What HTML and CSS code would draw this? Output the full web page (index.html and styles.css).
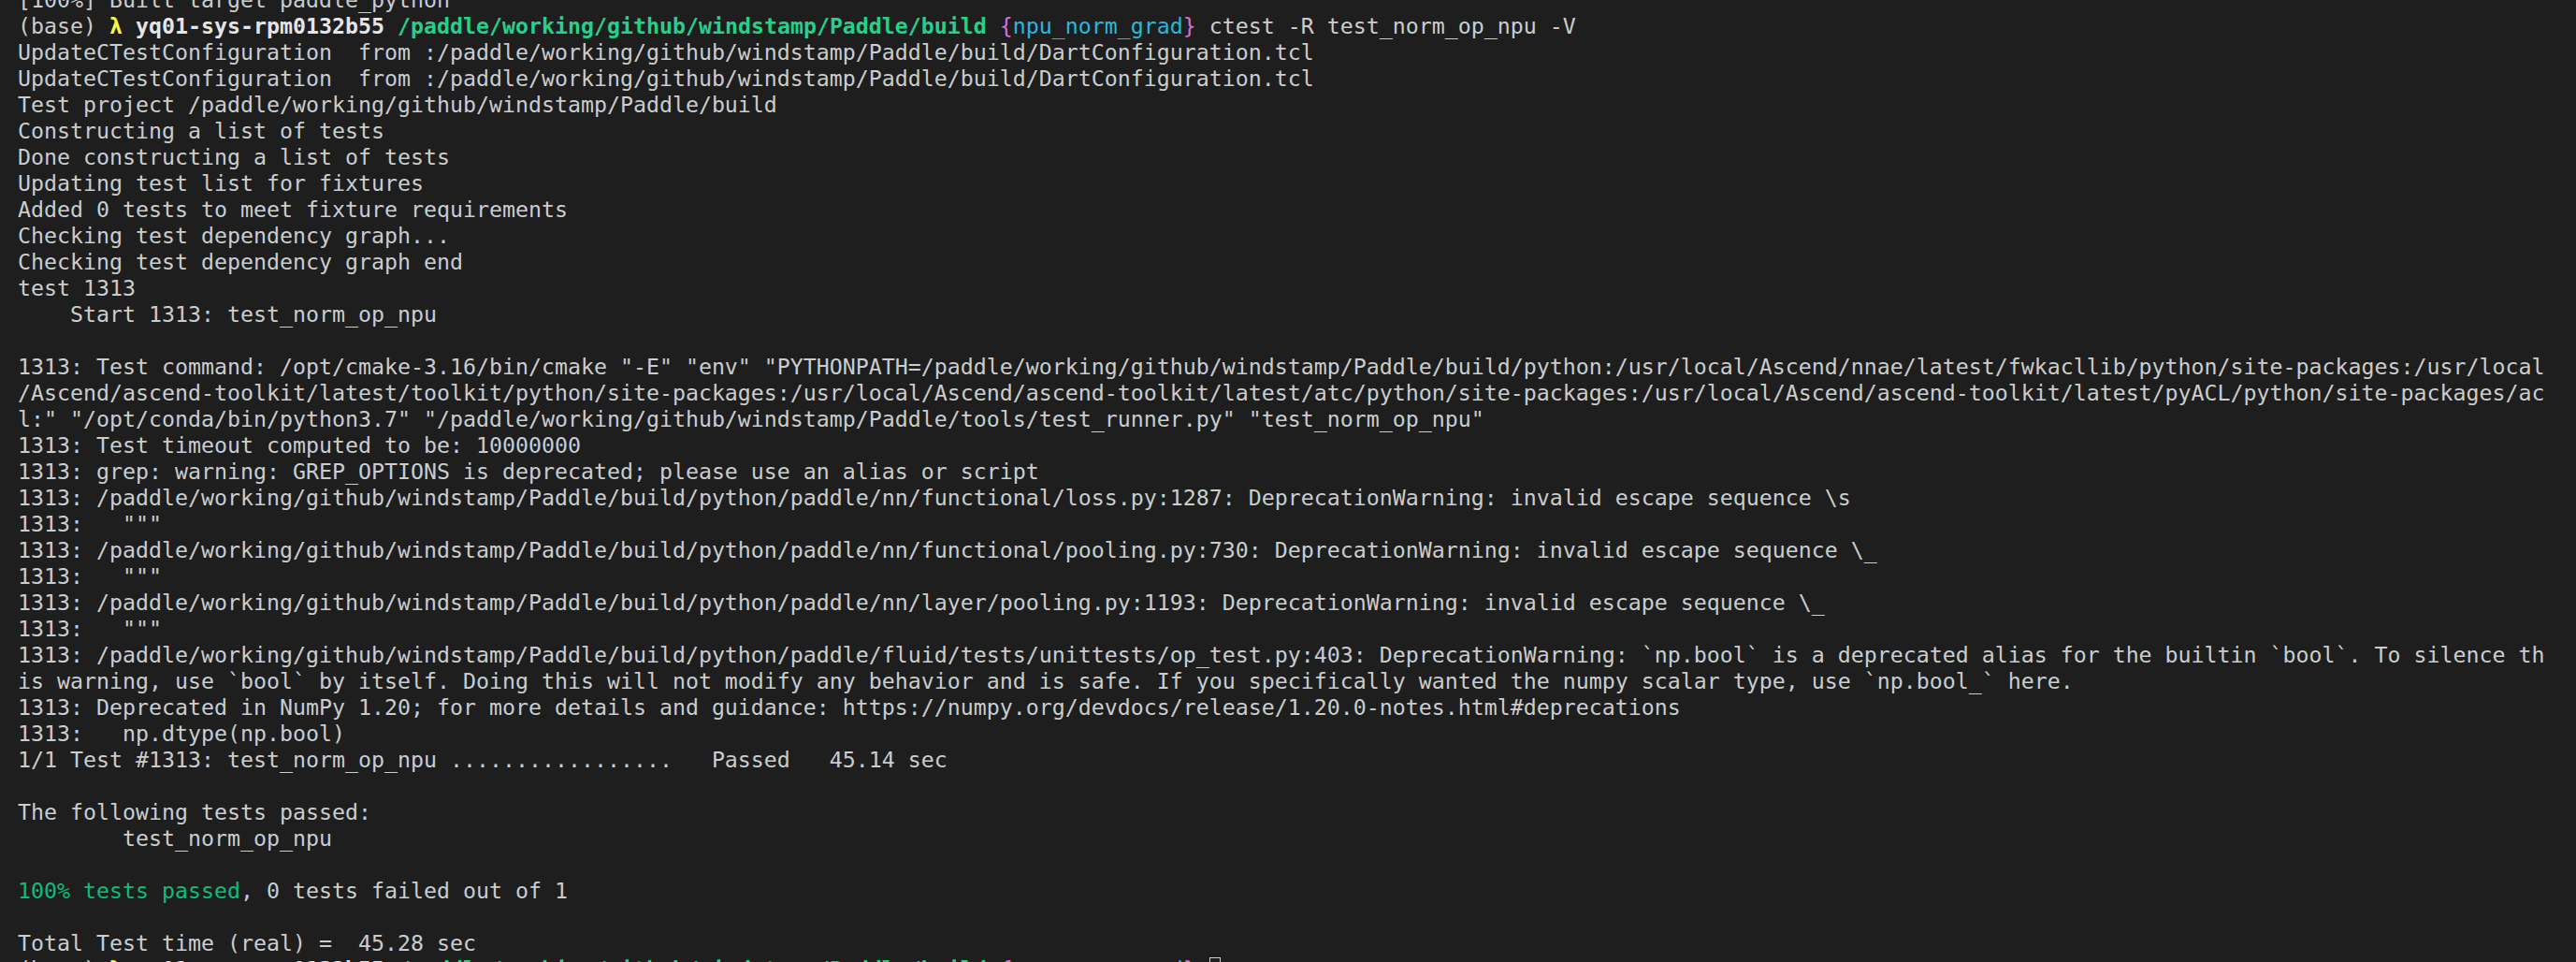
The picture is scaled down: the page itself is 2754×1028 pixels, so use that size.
FILE: index.html
```html
<!DOCTYPE html>
<html>
<head>
<meta charset="utf-8">
<title>Terminal</title>
<link rel="stylesheet" href="styles.css">
</head>
<body>
<main class="terminal">
<pre class="output">[100%] Built target paddle_python
(base) <span class="lambda">λ</span> <span class="host">yq01-sys-rpm0132b55</span> <span class="path">/paddle/working/github/windstamp/Paddle/build</span> <span class="brace">{</span><span class="branch">npu_norm_grad</span><span class="brace">}</span> ctest -R test_norm_op_npu -V
UpdateCTestConfiguration  from :/paddle/working/github/windstamp/Paddle/build/DartConfiguration.tcl
UpdateCTestConfiguration  from :/paddle/working/github/windstamp/Paddle/build/DartConfiguration.tcl
Test project /paddle/working/github/windstamp/Paddle/build
Constructing a list of tests
Done constructing a list of tests
Updating test list for fixtures
Added 0 tests to meet fixture requirements
Checking test dependency graph...
Checking test dependency graph end
test 1313
    Start 1313: test_norm_op_npu

1313: Test command: /opt/cmake-3.16/bin/cmake "-E" "env" "PYTHONPATH=/paddle/working/github/windstamp/Paddle/build/python:/usr/local/Ascend/nnae/latest/fwkacllib/python/site-packages:/usr/local
/Ascend/ascend-toolkit/latest/toolkit/python/site-packages:/usr/local/Ascend/ascend-toolkit/latest/atc/python/site-packages:/usr/local/Ascend/ascend-toolkit/latest/pyACL/python/site-packages/ac
l:" "/opt/conda/bin/python3.7" "/paddle/working/github/windstamp/Paddle/tools/test_runner.py" "test_norm_op_npu"
1313: Test timeout computed to be: 10000000
1313: grep: warning: GREP_OPTIONS is deprecated; please use an alias or script
1313: /paddle/working/github/windstamp/Paddle/build/python/paddle/nn/functional/loss.py:1287: DeprecationWarning: invalid escape sequence \s
1313:   """
1313: /paddle/working/github/windstamp/Paddle/build/python/paddle/nn/functional/pooling.py:730: DeprecationWarning: invalid escape sequence \_
1313:   """
1313: /paddle/working/github/windstamp/Paddle/build/python/paddle/nn/layer/pooling.py:1193: DeprecationWarning: invalid escape sequence \_
1313:   """
1313: /paddle/working/github/windstamp/Paddle/build/python/paddle/fluid/tests/unittests/op_test.py:403: DeprecationWarning: `np.bool` is a deprecated alias for the builtin `bool`. To silence th
is warning, use `bool` by itself. Doing this will not modify any behavior and is safe. If you specifically wanted the numpy scalar type, use `np.bool_` here.
1313: Deprecated in NumPy 1.20; for more details and guidance: https://numpy.org/devdocs/release/1.20.0-notes.html#deprecations
1313:   np.dtype(np.bool)
1/1 Test #1313: test_norm_op_npu .................   Passed   45.14 sec

The following tests passed:
        test_norm_op_npu

<span class="ok">100% tests passed</span>, 0 tests failed out of 1

Total Test time (real) =  45.28 sec
(base) <span class="lambda">λ</span> <span class="host">yq01-sys-rpm0132b55</span> <span class="path">/paddle/working/github/windstamp/Paddle/build</span> <span class="brace">{</span><span class="branch">npu_norm_grad</span><span class="brace">}</span> <span class="cursor"> </span></pre>
</main>
</body>
</html>
```

FILE: styles.css
```css
html, body {
  margin: 0;
  padding: 0;
  background: #1e1e1e;
  overflow: hidden;
}

.terminal {
  height: 1028px;
  overflow: hidden;
  background: #1e1e1e;
}

.output {
  margin: -14px 0 0 0;
  padding: 0 0 0 19px;
  font-family: "DejaVu Sans Mono", "Liberation Mono", monospace;
  font-size: 23.25px;
  line-height: 28px;
  color: #cccccc;
  white-space: pre;
}

.lambda {
  color: #f5f543;
  font-weight: bold;
}

.host {
  color: #e5e5e5;
  font-weight: bold;
}

.path {
  color: #23d18b;
  font-weight: bold;
}

.brace {
  color: #d670d6;
}

.branch {
  color: #29b8db;
}

.ok {
  color: #0dbc79;
}

.cursor {
  display: inline-block;
  width: 12px;
  height: 26px;
  vertical-align: top;
  margin-top: 1px;
  outline: 1px solid #cccccc;
  outline-offset: -1px;
}
```
